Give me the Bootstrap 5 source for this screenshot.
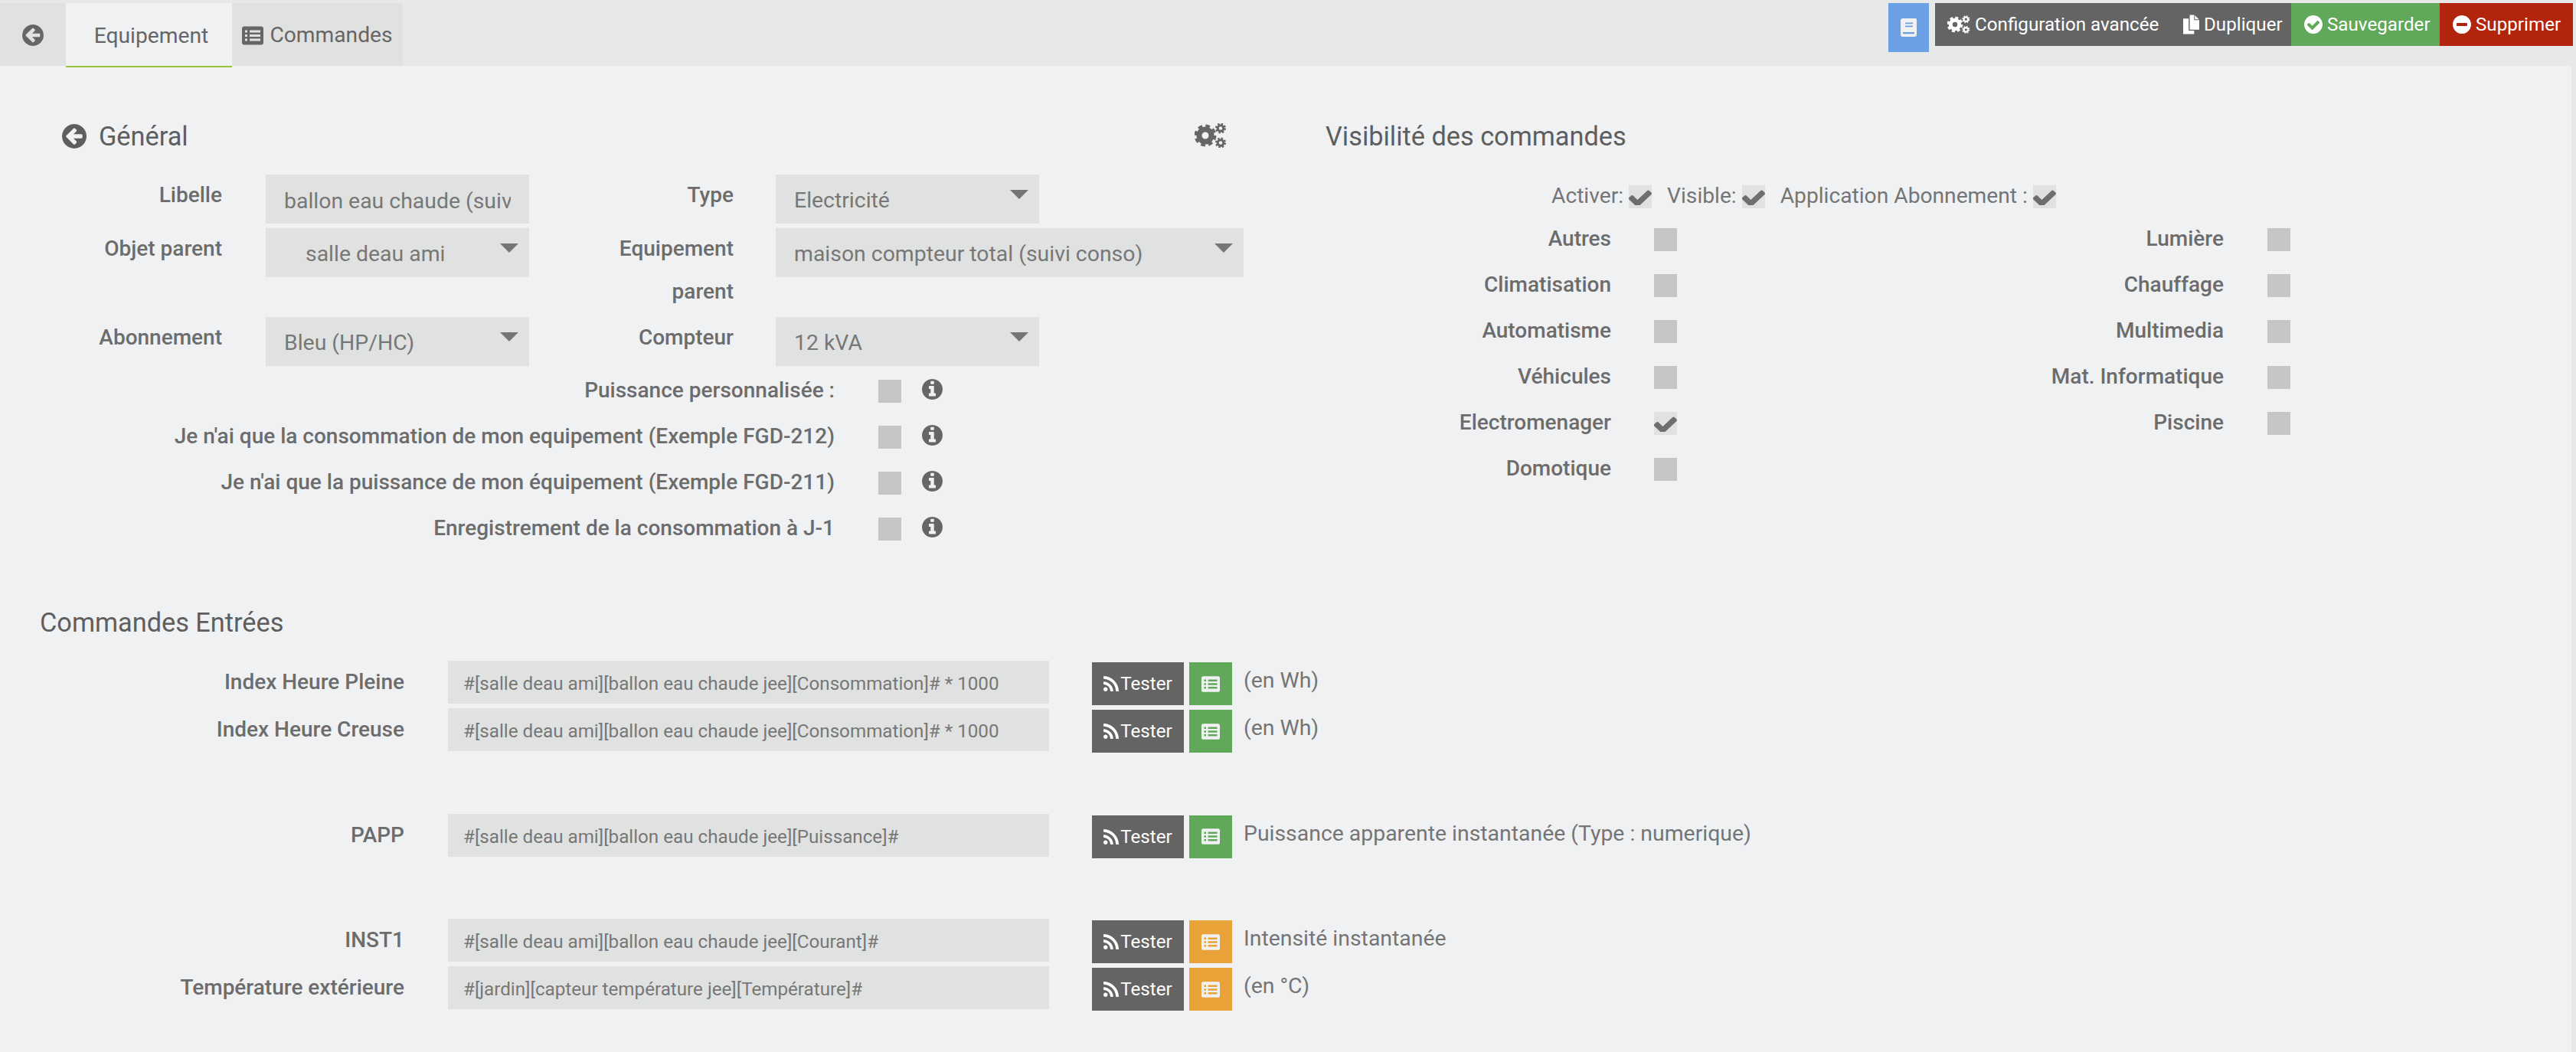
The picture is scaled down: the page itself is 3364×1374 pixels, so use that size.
<!DOCTYPE html>
<html lang="fr">
<head>
<meta charset="utf-8">
<title>Equipement</title>
<link href="https://cdn.jsdelivr.net/npm/bootstrap@5.3.0/dist/css/bootstrap.min.css" rel="stylesheet">
<style>
:root{--ink:#666;--field:#e0e2e1;--page:#f0f1f3;--bar:#e8e8e9;--lab:#6c6c6c;--soft:#757575;}
html,body{height:100%;}
body{background:var(--bar);font-family:Roboto,"Liberation Sans",sans-serif;font-size:28.4px;line-height:56px;color:var(--ink);overflow:hidden;margin:0;}
.fa{fill:currentColor;display:inline-block;flex:none;}
/* top bar */
.topbar{height:86px;padding-top:4px;position:relative;}
.tabstrip{height:82px;}
.tabcell{height:82px;background:var(--field);color:#666;text-decoration:none;font-size:28.2px;display:flex;align-items:center;gap:8px;padding-top:2px;}
.tab-back{width:86px;justify-content:center;padding-top:1px;}
.tab-active{width:217px;background:var(--page);justify-content:center;position:relative;z-index:1;height:84px;padding-left:6px;box-shadow:inset 0 -2px 0 #97c23c;}
.tab-cmd{width:223px;justify-content:center;}
.actions{align-items:flex-start;margin-right:4px;}
.act{display:flex;align-items:center;color:#fff;font-size:24.2px;height:56px;line-height:56px;text-decoration:none;gap:6px;white-space:nowrap;}
.act-book{width:53px;height:64px;background:#6ca0e4;margin-right:8px;justify-content:center;color:#f0f1f2;}
.act-dark{background:#646464;}
.act-conf{width:310px;padding-left:16px;}
.act-dup{width:155px;padding-left:14px;}
.act-save{background:#62a85b;width:194px;padding-left:17px;}
.act-del{background:#b3240c;width:174px;padding-left:17px;}
/* page */
.sheet{background:var(--page);margin-right:6px;height:1288px;}
.pane{width:1682px;flex:none;padding-top:64px;}
.pane-right{padding-left:49px;}
.sect-title{font-size:34.3px;line-height:56px;font-weight:400;color:#5e5e5e;margin:0;}
.gen-head{padding-left:81px;width:1602px;height:56px;margin-bottom:22px;}
.gen-gears{margin-top:-3px;}
/* form rows */
.frm-line{display:flex;margin-bottom:6px;}
.frm-tall{height:110px;}
.lab{font-weight:500;font-size:28px;text-align:right;color:var(--lab);flex:none;}
.lab-a{width:290px;margin-right:57px;margin-top:-1px;}
.lab-b{width:267px;margin-right:55px;margin-top:-1px;}
.fld{height:64px;border:0;border-radius:0;background-color:var(--field);color:#777;font-size:28.4px;line-height:60px;padding:4px 24px 0 24px;width:344px;flex:none;box-shadow:none;font-family:inherit;}
.fld:focus{background-color:var(--field);color:#777;box-shadow:none;}
.fld-wide{width:611px;}
.form-select.fld{background-image:url("data:image/svg+xml,%3Csvg xmlns='http://www.w3.org/2000/svg' viewBox='0 0 24 12'%3E%3Cpath fill='%23757575' d='M0 0h24L12 12z'/%3E%3C/svg%3E");background-size:24px 12px;background-position:right 14px top 20px;padding-right:42px;}
.fld-indent.form-select{padding-left:52px;}
.opt-list{margin-top:18px;}
.opt-line{display:flex;height:60px;align-items:flex-start;}
.opt-lab{width:1090px;text-align:right;font-weight:500;font-size:28px;color:var(--lab);flex:none;margin-top:-14px;}
.box{appearance:none;-webkit-appearance:none;width:30px;height:30px;background-color:#c6c6c6;border:0;border-radius:0;margin:0;flex:none;background-position:center 6px;background-repeat:no-repeat;background-size:30px 20px;display:block;}
.box:checked{background-color:var(--field);background-image:url("data:image/svg+xml,%3Csvg xmlns='http://www.w3.org/2000/svg' viewBox='127 306 1544 1100' preserveAspectRatio='none'%3E%3Cpath fill='%236e6e6e' d='M1671 566q0 40-28 68l-724 724-136 136q-28 28-68 28t-68-28l-136-136-362-362q-28-28-28-68t28-68l136-136q28-28 68-28t68 28l294 295 656-657q28-28 68-28t68 28l136 136q28 28 28 68z'/%3E%3C/svg%3E");}
.opt-box{margin-left:57px;width:30px;}
.opt-info{margin-left:27px;color:#666;margin-top:-1px;}
/* visibility */
.vis-top{display:flex;height:56px;margin-top:36px;padding-left:295px;}
.vis-top span{color:var(--soft);font-size:28.2px;white-space:nowrap;margin-top:-14px;}
.vis-top .box{margin-left:7px;}
.vis-top span + .box + span{margin-left:20px;}
.vis-line{display:flex;height:60px;}
.vis-cell{display:flex;flex:none;}
.vis-cell .lab{margin-top:-14px;width:373px;}
.vis-l{width:800px;}
.vis-l .box{margin-left:56px;}
.vis-r .box{margin-left:57px;}
/* commands */
.cmd-head{padding-left:52px;height:56px;margin-top:49px;margin-bottom:22px;}
.cmd-line{display:flex;height:56px;margin-bottom:6px;}
.cmd-lab{width:528px;margin-right:57px;font-weight:500;font-size:28px;text-align:right;color:var(--lab);flex:none;}
.cmd-fld{width:785px;height:56px;flex:none;background:var(--field);border:0;border-radius:0;color:#777;font-size:24.2px;padding:4px 20px 0;box-shadow:none;font-family:inherit;}
.cmd-btn{height:56px;line-height:56px;border-radius:0;border:0;padding:0;color:#fff;display:flex;align-items:center;justify-content:center;font-size:24.2px;margin-top:2px;flex:none;}
.cmd-test{background:#646464;width:120px;margin-left:56px;gap:2px;}
.cmd-list{width:56px;margin-left:7px;color:#f0f1f2;}
.cmd-ok{background:#62a85b;}
.cmd-warn{background:#e9a339;}
.cmd-note{margin-left:15px;color:var(--soft);margin-top:-2px;white-space:nowrap;}
.cmd-gap{height:75.5px;}
</style>
</head>
<body>
<svg width="0" height="0" class="d-none" aria-hidden="true">
<defs>
<symbol id="i-left" viewBox="0 0 1536 1536"><path transform="translate(0 -128)" d="M1280 960v-128q0-26-19-45t-45-19h-502l189-189q19-19 19-45t-19-45l-91-91q-18-18-45-18t-45 18l-362 362-91 91q-18 18-18 45t18 45l91 91 362 362q18 18 45 18t45-18l91-91q18-18 18-45t-18-45l-189-189h502q26 0 45-19t19-45zm256-64q0 209-103 385.500t-279.500 279.500-385.500 103-385.500-103-279.500-279.500-103-385.500 103-385.500 279.500-279.500 385.500-103 385.500 103 279.500 279.500 103 385.500z"/></symbol>
<symbol id="i-ok" viewBox="0 0 1536 1536"><path transform="translate(0 -128)" d="M1284 734q0-28-18-46l-91-90q-19-19-45-19t-45 19l-408 407-226-226q-19-19-45-19t-45 19l-91 90q-18 18-18 46 0 27 18 45l362 362q19 19 45 19 27 0 46-19l543-543q18-18 18-45zm252 162q0 209-103 385.500t-279.500 279.500-385.500 103-385.500-103-279.500-279.500-103-385.500 103-385.500 279.500-279.500 385.500-103 385.500 103 279.500 279.500 103 385.500z"/></symbol>
<symbol id="i-minus" viewBox="0 0 1536 1536"><path transform="translate(0 -128)" d="M1216 960v-128q0-26-19-45t-45-19h-768q-26 0-45 19t-19 45v128q0 26 19 45t45 19h768q26 0 45-19t19-45zm320-64q0 209-103 385.500t-279.500 279.500-385.500 103-385.500-103-279.500-279.500-103-385.500 103-385.500 279.500-279.500 385.500-103 385.500 103 279.500 279.500 103 385.500z"/></symbol>
<symbol id="i-info" viewBox="0 0 1536 1536"><path transform="translate(0 -128)" d="M1024 1376v-160q0-14-9-23t-23-9h-96v-512q0-14-9-23t-23-9h-320q-14 0-23 9t-9 23v160q0 14 9 23t23 9h96v320h-96q-14 0-23 9t-9 23v160q0 14 9 23t23 9h448q14 0 23-9t9-23zm-128-896v-160q0-14-9-23t-23-9h-192q-14 0-23 9t-9 23v160q0 14 9 23t23 9h192q14 0 23-9t9-23zm640 416q0 209-103 385.500t-279.500 279.500-385.500 103-385.500-103-279.500-279.500-103-385.500 103-385.500 279.500-279.500 385.500-103 385.500 103 279.500 279.500 103 385.500z"/></symbol>
<symbol id="i-rss" viewBox="0 0 1408 1408"><path transform="translate(-192 -128)" d="M576 1344q0 80-56 136t-136 56-136-56-56-136 56-136 136-56 136 56 56 136zm512 123q2 28-17 48-18 21-47 21h-135q-25 0-43-16.500t-20-41.500q-22-229-184.500-391.500t-391.500-184.500q-25-2-41.500-20t-16.500-43v-135q0-29 21-47 17-17 43-17h5q160 13 306 80.500t259 181.500q114 113 181.500 259t80.500 306zm512 2q2 27-18 47-18 20-46 20h-143q-26 0-44.500-17.500t-19.500-42.500q-12-215-101-408.500t-231.500-336-336-231.500-408.500-102q-25-1-42.500-19.500t-17.500-43.500v-143q0-28 20-46 18-18 44-18h3q262 13 501.500 120t425.500 294q187 186 294 425.500t120 501.500z"/></symbol>
<symbol id="i-list" viewBox="0 0 28 24"><path fill-rule="evenodd" d="M3 0h22a3 3 0 0 1 3 3v18a3 3 0 0 1-3 3H3a3 3 0 0 1-3-3V3a3 3 0 0 1 3-3zM4 5v3h3V5zM10 5v3h14V5zM4 10.500v3h3v-3zM10 10.500v3h14v-3zM4 16v3h3v-3zM10 16v3h14v-3z"/></symbol>
<symbol id="i-dup" viewBox="0 0 22 26"><path fill-rule="evenodd" d="M9 0h6v7h7v13H9zM16 0.500 21.500 6H16zM0 5h7.500v16.500H15V26H0z"/></symbol>
<symbol id="i-book" viewBox="0 0 21 24"><path fill-rule="evenodd" d="M3 0h16.500a1.500 1.500 0 0 1 1.500 1.500V21a3 3 0 0 1-3 3H3a3 3 0 0 1-3-3V3a3 3 0 0 1 3-3zM6 5.500v1.800h10V5.500zM6 9.500v1.800h10V9.500zM3 18v2.200h15V18z"/></symbol>
<symbol id="i-gears" viewBox="0 0 42 32">
<g fill="none" stroke="currentColor">
<circle cx="14" cy="16" r="8" stroke-width="7"/>
<circle cx="14" cy="16" r="12.500" stroke-width="4" stroke-dasharray="5.600 4.220"/>
<circle cx="34" cy="6.500" r="3.800" stroke-width="3"/>
<circle cx="34" cy="6.500" r="5.800" stroke-width="2.500" stroke-dasharray="2.400 2.150"/>
<circle cx="34" cy="25.500" r="3.800" stroke-width="3"/>
<circle cx="34" cy="25.500" r="5.800" stroke-width="2.500" stroke-dasharray="2.400 2.150"/>
</g>
</symbol>
</defs>
</svg>

<div class="topbar d-flex justify-content-between">
  <nav class="tabstrip d-flex">
    <a class="tabcell tab-back" href="#"><svg class="fa" width="28" height="28"><use href="#i-left"/></svg></a>
    <a class="tabcell tab-active" href="#">Equipement</a>
    <a class="tabcell tab-cmd" href="#"><svg class="fa" width="28" height="25"><use href="#i-list"/></svg>Commandes</a>
  </nav>
  <div class="actions d-flex">
    <a class="act act-book" href="#"><svg class="fa" width="21" height="24"><use href="#i-book"/></svg></a>
    <a class="act act-dark act-conf" href="#"><svg class="fa" width="30" height="24"><use href="#i-gears"/></svg>Configuration avancée</a>
    <a class="act act-dark act-dup" href="#"><svg class="fa" width="21" height="26"><use href="#i-dup"/></svg>Dupliquer</a>
    <a class="act act-save" href="#"><svg class="fa" width="24" height="24"><use href="#i-ok"/></svg>Sauvegarder</a>
    <a class="act act-del" href="#"><svg class="fa" width="24" height="24"><use href="#i-minus"/></svg>Supprimer</a>
  </div>
</div>

<main class="sheet">
  <div class="d-flex">
    <section class="pane pane-left">
      <div class="gen-head d-flex align-items-center justify-content-between">
        <h4 class="sect-title d-flex align-items-center gap-3"><svg class="fa" width="32" height="32"><use href="#i-left"/></svg>Général</h4>
        <svg class="fa gen-gears" width="42" height="32"><use href="#i-gears"/></svg>
      </div>
      <div class="frm-line">
        <label class="lab lab-a">Libelle</label>
        <input class="form-control fld" value="ballon eau chaude (suivi conso)">
        <label class="lab lab-b">Type</label>
        <select class="form-select fld"><option>Electricité</option></select>
      </div>
      <div class="frm-line frm-tall">
        <label class="lab lab-a">Objet parent</label>
        <select class="form-select fld fld-indent"><option>salle deau ami</option></select>
        <label class="lab lab-b">Equipement<br>parent</label>
        <select class="form-select fld fld-wide"><option>maison compteur total (suivi conso)</option></select>
      </div>
      <div class="frm-line">
        <label class="lab lab-a">Abonnement</label>
        <select class="form-select fld"><option>Bleu (HP/HC)</option></select>
        <label class="lab lab-b">Compteur</label>
        <select class="form-select fld"><option>12 kVA</option></select>
      </div>
      <div class="opt-list">
        <div class="opt-line"><label class="opt-lab">Puissance personnalisée :</label><div class="opt-box"><input type="checkbox" class="box"></div><svg class="fa opt-info" width="27" height="27"><use href="#i-info"/></svg></div>
        <div class="opt-line"><label class="opt-lab">Je n'ai que la consommation de mon equipement (Exemple FGD-212)</label><div class="opt-box"><input type="checkbox" class="box"></div><svg class="fa opt-info" width="27" height="27"><use href="#i-info"/></svg></div>
        <div class="opt-line"><label class="opt-lab">Je n'ai que la puissance de mon équipement (Exemple FGD-211)</label><div class="opt-box"><input type="checkbox" class="box"></div><svg class="fa opt-info" width="27" height="27"><use href="#i-info"/></svg></div>
        <div class="opt-line"><label class="opt-lab">Enregistrement de la consommation à J-1</label><div class="opt-box"><input type="checkbox" class="box"></div><svg class="fa opt-info" width="27" height="27"><use href="#i-info"/></svg></div>
      </div>
    </section>
    <section class="pane pane-right">
      <h4 class="sect-title">Visibilité des commandes</h4>
      <div class="vis-top">
        <span>Activer:</span><input type="checkbox" class="box" checked>
        <span>Visible:</span><input type="checkbox" class="box" checked>
        <span>Application Abonnement :</span><input type="checkbox" class="box" checked>
      </div>
      <div class="vis-grid">
        <div class="vis-line"><div class="vis-cell vis-l"><label class="lab">Autres</label><input type="checkbox" class="box"></div><div class="vis-cell vis-r"><label class="lab">Lumière</label><input type="checkbox" class="box"></div></div>
        <div class="vis-line"><div class="vis-cell vis-l"><label class="lab">Climatisation</label><input type="checkbox" class="box"></div><div class="vis-cell vis-r"><label class="lab">Chauffage</label><input type="checkbox" class="box"></div></div>
        <div class="vis-line"><div class="vis-cell vis-l"><label class="lab">Automatisme</label><input type="checkbox" class="box"></div><div class="vis-cell vis-r"><label class="lab">Multimedia</label><input type="checkbox" class="box"></div></div>
        <div class="vis-line"><div class="vis-cell vis-l"><label class="lab">Véhicules</label><input type="checkbox" class="box"></div><div class="vis-cell vis-r"><label class="lab">Mat. Informatique</label><input type="checkbox" class="box"></div></div>
        <div class="vis-line"><div class="vis-cell vis-l"><label class="lab">Electromenager</label><input type="checkbox" class="box" checked></div><div class="vis-cell vis-r"><label class="lab">Piscine</label><input type="checkbox" class="box"></div></div>
        <div class="vis-line"><div class="vis-cell vis-l"><label class="lab">Domotique</label><input type="checkbox" class="box"></div></div>
      </div>
    </section>
  </div>
  <section class="cmd-block">
    <h4 class="sect-title cmd-head">Commandes Entrées</h4>
    <div class="cmd-line"><label class="cmd-lab">Index Heure Pleine</label><input class="form-control cmd-fld" value="#[salle deau ami][ballon eau chaude jee][Consommation]# * 1000"><button class="btn cmd-btn cmd-test"><svg class="fa" width="20" height="20"><use href="#i-rss"/></svg>Tester</button><button class="btn cmd-btn cmd-list cmd-ok"><svg class="fa" width="24" height="21"><use href="#i-list"/></svg></button><span class="cmd-note">(en Wh)</span></div>
    <div class="cmd-line"><label class="cmd-lab">Index Heure Creuse</label><input class="form-control cmd-fld" value="#[salle deau ami][ballon eau chaude jee][Consommation]# * 1000"><button class="btn cmd-btn cmd-test"><svg class="fa" width="20" height="20"><use href="#i-rss"/></svg>Tester</button><button class="btn cmd-btn cmd-list cmd-ok"><svg class="fa" width="24" height="21"><use href="#i-list"/></svg></button><span class="cmd-note">(en Wh)</span></div>
    <div class="cmd-gap"></div>
    <div class="cmd-line"><label class="cmd-lab">PAPP</label><input class="form-control cmd-fld" value="#[salle deau ami][ballon eau chaude jee][Puissance]#"><button class="btn cmd-btn cmd-test"><svg class="fa" width="20" height="20"><use href="#i-rss"/></svg>Tester</button><button class="btn cmd-btn cmd-list cmd-ok"><svg class="fa" width="24" height="21"><use href="#i-list"/></svg></button><span class="cmd-note">Puissance apparente instantanée (Type : numerique)</span></div>
    <div class="cmd-gap"></div>
    <div class="cmd-line"><label class="cmd-lab">INST1</label><input class="form-control cmd-fld" value="#[salle deau ami][ballon eau chaude jee][Courant]#"><button class="btn cmd-btn cmd-test"><svg class="fa" width="20" height="20"><use href="#i-rss"/></svg>Tester</button><button class="btn cmd-btn cmd-list cmd-warn"><svg class="fa" width="24" height="21"><use href="#i-list"/></svg></button><span class="cmd-note">Intensité instantanée</span></div>
    <div class="cmd-line"><label class="cmd-lab">Température extérieure</label><input class="form-control cmd-fld" value="#[jardin][capteur température jee][Température]#"><button class="btn cmd-btn cmd-test"><svg class="fa" width="20" height="20"><use href="#i-rss"/></svg>Tester</button><button class="btn cmd-btn cmd-list cmd-warn"><svg class="fa" width="24" height="21"><use href="#i-list"/></svg></button><span class="cmd-note">(en °C)</span></div>
  </section>
</main>
<script src="https://cdn.jsdelivr.net/npm/bootstrap@5.3.0/dist/js/bootstrap.bundle.min.js"></script>
</body>
</html>
